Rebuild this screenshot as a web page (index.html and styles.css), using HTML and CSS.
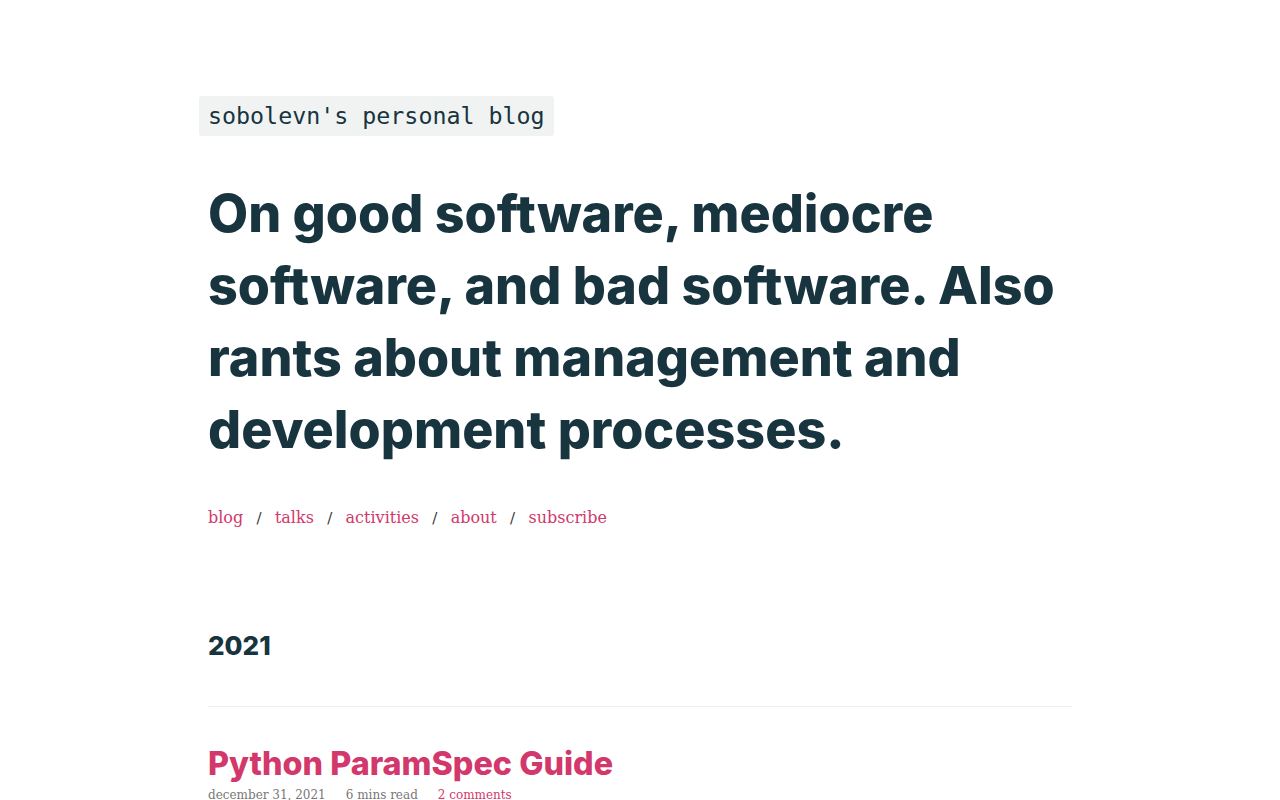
FILE: index.html
```html
<!DOCTYPE html>
<html lang="en">
<head>
<meta charset="utf-8">
<title>sobolevn's personal blog</title>
<link rel="stylesheet" href="styles.css">
</head>
<body>
<div class="page">
  <header class="header">
    <a class="label" href="#">sobolevn's personal blog</a>
    <h1 class="tagline">On good software, mediocre software, and bad software. Also rants about management and development processes.</h1>
    <nav class="nav">
      <a href="#">blog</a><span class="sep">/</span>
      <a href="#">talks</a><span class="sep">/</span>
      <a href="#">activities</a><span class="sep">/</span>
      <a href="#">about</a><span class="sep">/</span>
      <a href="#">subscribe</a>
    </nav>
  </header>
  <main class="posts">
    <h2 class="year">2021</h2>
    <hr class="rule">
    <article class="post">
      <h3 class="post-title"><a href="#">Python ParamSpec Guide</a></h3>
      <div class="meta">
        <span>december 31, 2021</span>
        <span>6 mins read</span>
        <a href="#">2 comments</a>
      </div>
    </article>
  </main>
</div>
</body>
</html>
```

FILE: styles.css
```css
html, body {
  margin: 0;
  padding: 0;
  background: #ffffff;
}

body {
  font-family: "DejaVu Serif", serif;
  color: #17343f;
}

a {
  text-decoration: none;
  color: #d2386b;
}

.page {
  width: 864px;
  margin: 0 auto;
  padding-top: 96px;
}

.header {
  display: flex;
  flex-direction: column;
  align-items: flex-start;
}

.label {
  display: inline-block;
  margin-left: -9px;
  padding: 0 9px;
  height: 40px;
  line-height: 40px;
  background: #f1f3f3;
  border-radius: 3px;
  font-family: "DejaVu Sans Mono", monospace;
  font-size: 23.3px;
  color: #17343f;
}

.tagline {
  margin: 42px 0 0;
  font-family: Inter, sans-serif;
  font-weight: 800;
  font-size: 52px;
  line-height: 72px;
  color: #17343f;
}

.nav {
  margin-top: 38px;
  display: flex;
  align-items: baseline;
  gap: 13.3px;
  font-size: 16px;
  line-height: 27px;
}

.nav .sep {
  color: #333;
  font-size: 15px;
}

.year {
  margin: 96px 0 0;
  font-family: Inter, sans-serif;
  font-weight: 800;
  font-size: 26px;
  line-height: 36px;
  color: #17343f;
}

.rule {
  margin: 42px 0 0;
  border: 0;
  height: 1px;
  background: #eeeeee;
}

.post-title {
  margin: 37px 0 0;
  font-family: Inter, sans-serif;
  font-weight: 800;
  font-size: 32.3px;
  line-height: 40px;
}

.meta {
  display: flex;
  gap: 20px;
  font-size: 12px;
  line-height: 23px;
  color: #777777;
}
```
